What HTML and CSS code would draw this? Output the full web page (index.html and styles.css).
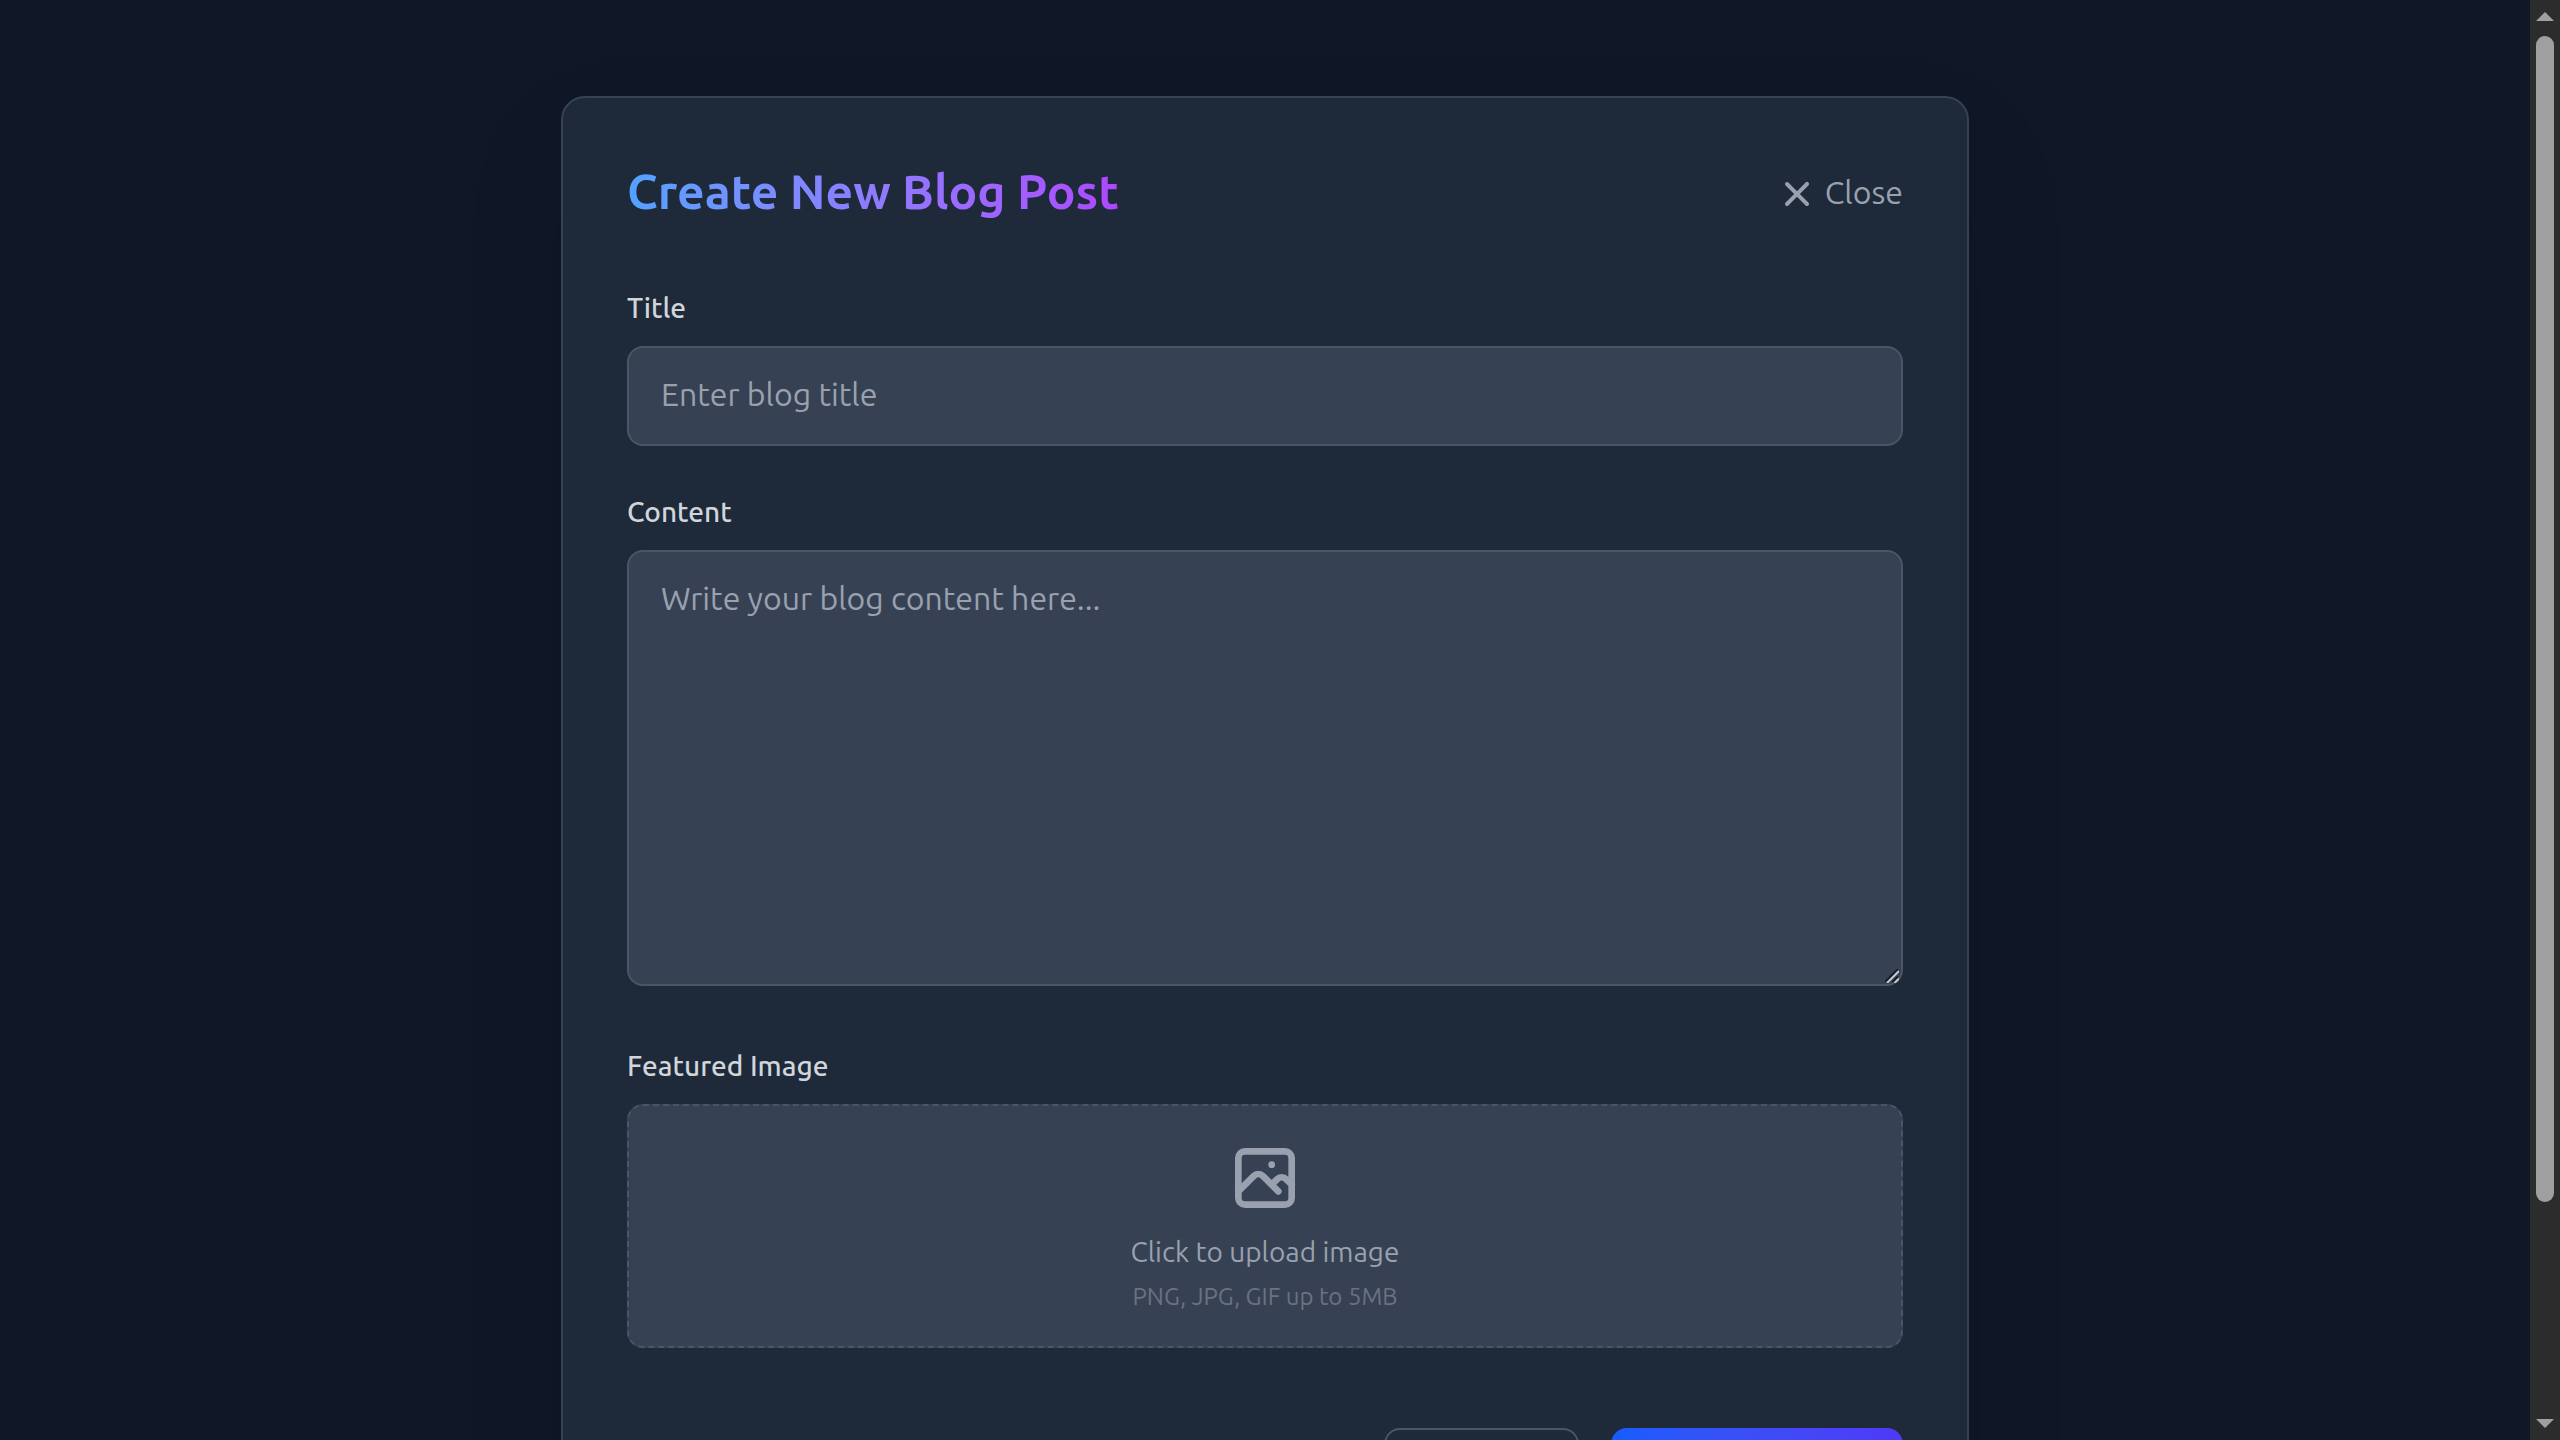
FILE: index.html
```html
<!DOCTYPE html>
<html lang="en">
<head>
<meta charset="utf-8">
<title>Create New Blog Post</title>
<link rel="stylesheet" href="styles.css">
</head>
<body>
<div class="viewport">
  <main class="page">
    <section class="card">
      <header class="card-header">
        <h1 class="heading">Create New Blog Post</h1>
        <button class="close" type="button">
          <svg class="close-icon" viewBox="0 0 20 20" fill="currentColor"><path fill-rule="evenodd" clip-rule="evenodd" d="M4.293 4.293a1 1 0 011.414 0L10 8.586l4.293-4.293a1 1 0 111.414 1.414L11.414 10l4.293 4.293a1 1 0 01-1.414 1.414L10 11.414l-4.293 4.293a1 1 0 01-1.414-1.414L8.586 10 4.293 5.707a1 1 0 010-1.414z"/></svg>
          <span class="close-text">Close</span>
        </button>
      </header>
      <form class="form">
        <div class="field">
          <label class="label" for="title">Title</label>
          <input class="control control-title" id="title" type="text" placeholder="Enter blog title">
        </div>
        <div class="field field-content">
          <label class="label" for="content">Content</label>
          <div class="area-wrap">
            <textarea class="control area" id="content" placeholder="Write your blog content here..."></textarea>
            <svg class="grip" viewBox="0 0 14 14"><path class="grip-dark" d="M0 13L13 0M7.500 13L13 7.500"/><path class="grip-light" d="M2 14L14 2M9.500 14L14 9.500"/></svg>
          </div>
        </div>
        <div class="field">
          <span class="label">Featured Image</span>
          <div class="dropzone">
            <svg class="image-icon" viewBox="0 0 24 24" fill="none" stroke="currentColor" stroke-width="2" stroke-linecap="round" stroke-linejoin="round"><path d="M4 16l4.586-4.586a2 2 0 012.828 0L16 16m-2-2l1.586-1.586a2 2 0 012.828 0L20 14m-6-6h.01M6 20h12a2 2 0 002-2V6a2 2 0 00-2-2H6a2 2 0 00-2 2v12a2 2 0 002 2z"/></svg>
            <span class="upload-text">Click to upload image</span>
            <span class="upload-hint">PNG, JPG, GIF up to 5MB</span>
          </div>
        </div>
        <div class="actions">
          <button class="btn btn-cancel" type="button" aria-label="Cancel"></button>
          <button class="btn btn-submit" type="submit" aria-label="Publish"></button>
        </div>
      </form>
    </section>
  </main>
  <div class="scrollbar">
    <svg class="arrow" viewBox="0 0 18 9"><path d="M9 0L18 9H0z"/></svg>
    <div class="thumb"></div>
    <svg class="arrow arrow-down" viewBox="0 0 18 9"><path d="M0 0H18L9 9z"/></svg>
  </div>
</div>
</body>
</html>
```
FILE: styles.css
```css
* { box-sizing: border-box; }
html, body { margin: 0; height: 100%; overflow: hidden; }
body { background: #101828; font-family: Ubuntu, "Noto Sans", sans-serif; color: #d1d5dc; }
button, input, textarea { font: inherit; }

.viewport { display: flex; width: 2560px; height: 1440px; overflow: hidden; }
.page { flex: 1; display: flex; justify-content: center; align-items: flex-start; height: 1440px; padding-top: 96px; overflow: hidden; }
.card { width: 1408px; padding: 64px; border: 2px solid #364153; border-radius: 24px; background: #1e2939; box-shadow: 0 50px 100px -24px rgba(0, 0, 0, .25); }

.card-header { display: flex; justify-content: space-between; align-items: center; height: 64px; margin-bottom: 64px; }
.heading { margin: 0; padding-bottom: 6px; font-size: 48px; line-height: 64px; font-weight: 600; white-space: nowrap; color: transparent; background: linear-gradient(to right in oklab, #51a2ff, #ad46ff); -webkit-background-clip: text; background-clip: text; }
.close { display: flex; align-items: center; gap: 8px; padding: 0; border: 0; background: none; color: #99a1af; }
.close-icon { width: 40px; height: 40px; }
.close-text { padding-bottom: 4px; font-size: 32px; line-height: 44px; }

.form { display: flex; flex-direction: column; gap: 48px; }
.field { display: flex; flex-direction: column; gap: 16px; }
.field-content { padding-bottom: 14px; }
.label { align-self: flex-start; padding-bottom: 4px; font-size: 28px; line-height: 36px; font-weight: 500; }
.control { display: block; width: 100%; margin: 0; border: 2px solid #4a5565; border-radius: 16px; outline: 0; background: #364153; color: #fff; font-size: 32px; line-height: 48px; }
.control::placeholder { color: #99a1af; opacity: 1; }
.control-title { height: 100px; padding: 22px 32px 26px; }
.area-wrap { position: relative; height: 436px; }
.area { height: 436px; padding: 22px 32px 26px; resize: none; overflow: hidden; }
.grip { position: absolute; right: 4px; bottom: 3px; width: 14px; height: 14px; fill: none; }
.grip-dark { stroke: #101828; stroke-width: 1.6; }
.grip-light { stroke: #c4c7cd; stroke-width: 2; }

.dropzone { display: flex; flex-direction: column; align-items: center; height: 244px; padding-top: 32px; border: 2px dashed #4a5565; border-radius: 16px; background: #364153; color: #99a1af; }
.image-icon { width: 80px; height: 80px; }
.upload-text { margin-top: 14px; font-size: 28px; line-height: 40px; }
.upload-hint { margin-top: 9px; font-size: 24px; line-height: 32px; color: #6a7282; }

.actions { display: flex; justify-content: flex-end; gap: 32px; padding-top: 32px; }
.btn { height: 100px; border-radius: 16px; }
.btn-cancel { width: 195px; border: 2px solid #4a5565; background: transparent; }
.btn-submit { width: 292px; border: 0; background: linear-gradient(to right in oklab, #155dfc, #4f39f6); }

.scrollbar { display: flex; flex-direction: column; align-items: center; width: 30px; padding: 12px 0; background: #2c2c2c; }
.arrow { display: block; width: 18px; height: 9px; fill: #9f9f9f; }
.thumb { width: 18px; height: 1166px; margin-top: 15px; border-radius: 9px; background: #9f9f9f; }
.arrow-down { margin-top: auto; }
```
